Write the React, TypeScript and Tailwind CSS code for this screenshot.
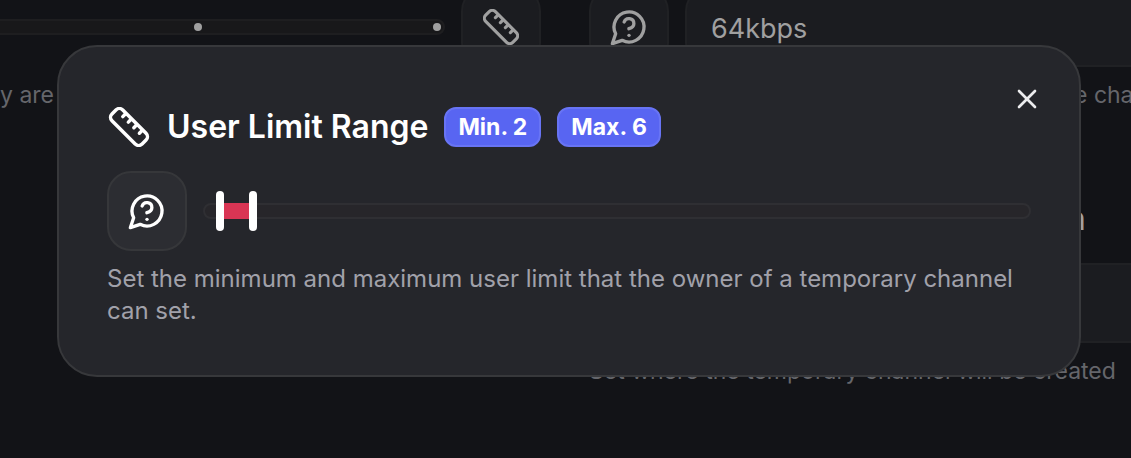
import { useState } from "react";
import { X } from "lucide-react";

function RulerIcon({ className }: { className: string }) {
  return (
    <svg viewBox="1 1 46 46" fill="none" stroke="currentColor" strokeWidth="4" strokeLinecap="round" strokeLinejoin="round" className={className} aria-hidden="true">
      <g transform="rotate(45 24 24)">
        <rect x="-0.5" y="15.2" width="49" height="17.6" rx="5.6" />
        <path d="M10.5 16v4.6M19.5 16v4.6M28.5 16v4.6M37.5 16v4.6" />
      </g>
    </svg>
  );
}

function HelpIcon({ className }: { className: string }) {
  return (
    <svg viewBox="0 0 24 24" fill="none" stroke="currentColor" strokeWidth="2" strokeLinecap="round" strokeLinejoin="round" className={className} aria-hidden="true">
      <path d="M7.9 20A9 9 0 1 0 4 16.1L2 22Z" />
      <path d="M9.09 9a3 3 0 0 1 5.83 1c0 2-3 3-3 3" />
      <path d="M12 17h.01" />
    </svg>
  );
}

const dimBox = "border-2 border-[#202124] bg-[#1b1c20] text-[#a0a0a0]";
const dimIconButton = `flex size-20 shrink-0 items-center justify-center rounded-3xl ${dimBox}`;
const thumbInput =
  "pointer-events-none absolute -inset-x-1 top-1/2 h-10 -translate-y-1/2 appearance-none bg-transparent [&::-webkit-slider-thumb]:pointer-events-auto [&::-webkit-slider-thumb]:h-10 [&::-webkit-slider-thumb]:w-2 [&::-webkit-slider-thumb]:appearance-none [&::-webkit-slider-thumb]:rounded-full [&::-webkit-slider-thumb]:bg-white";

const MAX = 99;

function SettingsPage() {
  return (
    <main className="-mt-[13px] grid grid-cols-2 gap-12 pr-px text-[23px] text-[#65666b]">
      <section>
        <div className="flex items-center gap-4">
          <div className="-ml-5 flex h-4 grow items-center justify-end gap-[231px] rounded-full border-2 border-[#1e1e20] bg-[#18181a] pr-0.5">
            <span className="size-2 rounded-full bg-[#a0a0a0]" />
            <span className="size-2 rounded-full bg-[#a0a0a0]" />
          </div>
          <button type="button" aria-label="Range" className={dimIconButton}>
            <RulerIcon className="size-9" />
          </button>
        </div>
        <p className="mt-3 leading-8">y are</p>
      </section>
      <section>
        <div className="flex gap-4">
          <button type="button" aria-label="Help" className={dimIconButton}>
            <HelpIcon className="size-10" />
          </button>
          <select aria-label="Bitrate" className={`-mr-10 h-20 grow appearance-none rounded-3xl px-6 pt-1 text-[27px] ${dimBox}`}>
            <option>64kbps</option>
          </select>
        </div>
        <p className="mt-3 pl-[485px] leading-8 whitespace-nowrap">e cha</p>
        <h2 className="mt-[88px] pl-[477px] text-[32px] leading-10 font-semibold text-[#a0a0a0]">n</h2>
        <div className={`mt-6 -mr-10 h-20 rounded-3xl ${dimBox}`} />
        <p className="mt-3 leading-8 whitespace-nowrap">Set where the temporary channel will be created</p>
      </section>
    </main>
  );
}

function RangeSlider({ low, high, onLow, onHigh }: { low: number; high: number; onLow: (n: number) => void; onHigh: (n: number) => void }) {
  return (
    <div className="relative h-4 grow">
      <div className="h-4 rounded-full border-2 border-[#2f2f33] bg-[#27262a]" />
      <div
        className="absolute inset-y-0 bg-[#d93554]"
        style={{ left: `${(low / MAX) * 100}%`, right: `${100 - (high / MAX) * 100}%` }}
      />
      <input type="range" aria-label="Minimum users" min={0} max={MAX} value={low} onChange={(e) => onLow(Math.min(Number(e.target.value), high))} className={thumbInput} />
      <input type="range" aria-label="Maximum users" min={0} max={MAX} value={high} onChange={(e) => onHigh(Math.max(Number(e.target.value), low))} className={thumbInput} />
    </div>
  );
}

function Badge({ children }: { children: React.ReactNode }) {
  return (
    <span className="flex h-10 items-center rounded-xl border-2 border-[#6874f4] bg-[#5865f2] px-3 text-[23px] font-bold whitespace-nowrap text-white">
      {children}
    </span>
  );
}

export default function App() {
  const [low, setLow] = useState(2);
  const [high, setHigh] = useState(6);
  return (
    <div className="min-h-screen overflow-hidden bg-[#121317] font-['Inter',sans-serif]">
      <SettingsPage />
      <div className="fixed inset-0 pt-[45px] pr-[50px] pl-[57px]">
        <div role="dialog" aria-labelledby="dialog-title" className="relative rounded-[40px] border-2 border-[#37383b] bg-[#25262b] px-12 pt-[60px] pb-12">
          <button type="button" aria-label="Close" className="absolute top-9 right-9 text-[#ececee]">
            <X className="size-8" strokeWidth={2} />
          </button>
          <div className="flex items-center gap-4">
            <RulerIcon className="h-10 w-11 text-white" />
            <h1 id="dialog-title" className="text-[32px] leading-10 font-semibold whitespace-nowrap text-white">User Limit Range</h1>
            <Badge>Min. {low}</Badge>
            <Badge>Max. {high}</Badge>
          </div>
          <div className="mt-6 flex items-center gap-4">
            <button type="button" aria-label="Help" className="flex size-20 shrink-0 items-center justify-center rounded-3xl border-2 border-[#36373a] bg-[#2c2d32] text-white">
              <HelpIcon className="size-10" />
            </button>
            <RangeSlider low={low} high={high} onLow={setLow} onHigh={setHigh} />
          </div>
          <p className="mt-3 text-2xl leading-8 text-[#a1a1aa]">
            Set the minimum and maximum user limit that the owner of a temporary channel can set.
          </p>
        </div>
      </div>
    </div>
  );
}
